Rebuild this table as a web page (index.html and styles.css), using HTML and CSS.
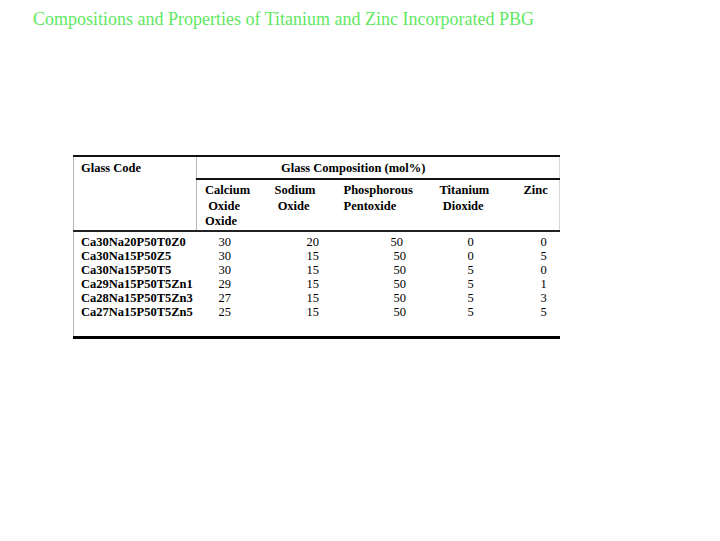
FILE: index.html
```html
<!DOCTYPE html>
<html>
<head>
<meta charset="utf-8">
<link rel="stylesheet" href="styles.css">
</head>
<body>
<div class="page">
  <h1 class="title">Compositions and Properties of Titanium and Zinc Incorporated PBG</h1>
  <table class="comp">
    <colgroup>
      <col class="c1"><col class="c2"><col class="c3"><col class="c4"><col class="c5"><col class="c6">
    </colgroup>
    <thead>
      <tr class="h1">
        <th class="code" rowspan="2">Glass Code</th>
        <th class="group" colspan="5">Glass Composition (mol%)</th>
      </tr>
      <tr class="h2">
        <th class="sub">Calcium<br>&nbsp;Oxide<br>Oxide</th>
        <th class="sub">Sodium<br>&nbsp;Oxide</th>
        <th class="sub">Phosphorous<br>Pentoxide</th>
        <th class="sub">Titanium<br>&nbsp;Dioxide</th>
        <th class="sub last">Zinc</th>
      </tr>
    </thead>
    <tbody>
      <tr class="first"><td class="name">Ca30Na20P50T0Z0</td><td class="d2">30</td><td class="d3">20</td><td class="d4 a">50</td><td class="d5">0</td><td class="d6">0</td></tr>
      <tr><td class="name">Ca30Na15P50Z5</td><td class="d2">30</td><td class="d3">15</td><td class="d4">50</td><td class="d5">0</td><td class="d6">5</td></tr>
      <tr><td class="name">Ca30Na15P50T5</td><td class="d2">30</td><td class="d3">15</td><td class="d4">50</td><td class="d5">5</td><td class="d6">0</td></tr>
      <tr><td class="name">Ca29Na15P50T5Zn1</td><td class="d2">29</td><td class="d3">15</td><td class="d4">50</td><td class="d5">5</td><td class="d6">1</td></tr>
      <tr><td class="name">Ca28Na15P50T5Zn3</td><td class="d2">27</td><td class="d3">15</td><td class="d4">50</td><td class="d5">5</td><td class="d6">3</td></tr>
      <tr class="lastrow"><td class="name">Ca27Na15P50T5Zn5</td><td class="d2">25</td><td class="d3">15</td><td class="d4">50</td><td class="d5">5</td><td class="d6">5</td></tr>
    </tbody>
  </table>
</div>
</body>
</html>
```
FILE: styles.css
```css
html, body {
  margin: 0;
  padding: 0;
  background: #ffffff;
}
.page {
  width: 720px;
  height: 541px;
  padding: 0;
  font-family: "Liberation Serif", "Times New Roman", serif;
  color: #000;
  overflow: hidden;
}
.title {
  margin: 0;
  padding: 8px 0 0 33px;
  font-size: 18px;
  line-height: 22px;
  font-weight: normal;
  color: #5fe85f;
}
.comp {
  margin: 125px 0 0 73px;
  border-collapse: collapse;
  table-layout: fixed;
  width: 486px;
  font-size: 12.5px;
  border-top: 2px solid #111;
  border-left: 1px solid #b8b8b8;
  border-bottom: 3px solid #000;
}
.c1 { width: 123px; }
.c2 { width: 70px; }
.c3 { width: 69px; }
.c4 { width: 96px; }
.c5 { width: 84px; }
.c6 { width: 44px; }
th, td {
  padding: 0;
  text-align: left;
  vertical-align: top;
}
th {
  font-weight: bold;
}
.h1 th {
  height: 20px;
  line-height: 20px;
  padding-top: 1px;
}
.code {
  padding-left: 7px;
  border-right: 1px solid #b8b8b8;
  border-bottom: 2px solid #222;
}
.group {
  padding-left: 84px;
  border-bottom: 2px solid #111;
  border-right: 1px solid #d8d8d8;
}
.h2 th {
  height: 47px;
  line-height: 15.5px;
  padding-top: 3px;
  padding-left: 8px;
  border-bottom: 2px solid #222;
}
.h2 .last {
  border-right: 1px solid #d8d8d8;
}
td {
  line-height: 14px;
  height: 14px;
}
.first td {
  padding-top: 3px;
}
.lastrow td {
  padding-bottom: 17px;
}
.name {
  font-weight: bold;
  padding-left: 7px;
}
.d2 { padding-left: 22px; }
.d3 { padding-left: 40px; }
.d4 { padding-left: 58px; }
.d4.a { padding-left: 55px; }
.d5 { padding-left: 36px; }
.d6 { padding-left: 25px; }
```
